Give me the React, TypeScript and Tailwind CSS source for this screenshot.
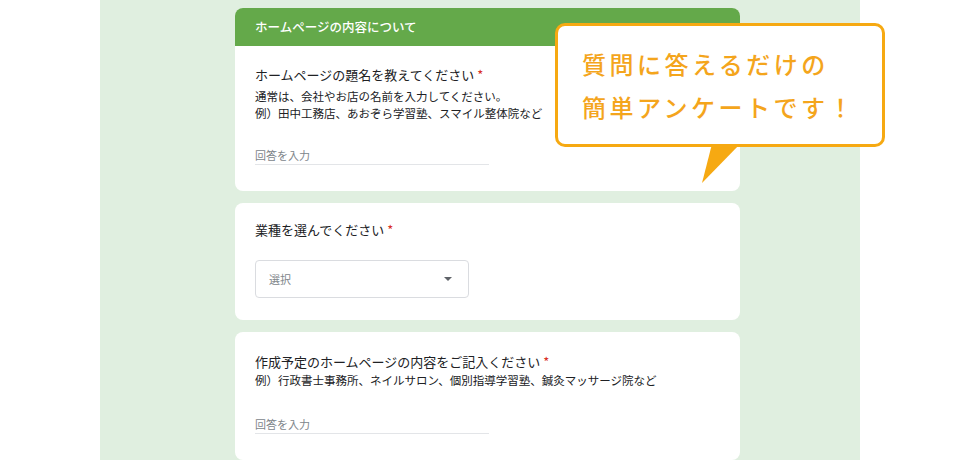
const jp = { fontFamily: '"Noto Sans CJK JP", "Noto Sans", sans-serif' };

function Required() {
  return <span className="ml-[3px] text-[#d93025]">*</span>;
}

function AnswerLine() {
  return (
    <div className="w-[234px] border-b border-[#e3e5e8] pb-[1px] text-[11px] leading-[16px] text-[#80868b]">
      回答を入力
    </div>
  );
}

export default function App() {
  return (
    <div className="relative h-[460px] w-[960px] overflow-hidden bg-white text-[#202124]" style={jp}>
      <div className="ml-[100px] h-full w-[760px] bg-[#e0efe0] pt-2">
        <div className="ml-[135px] flex w-[505px] flex-col gap-3">
          {/* section card */}
          <div className="rounded-lg bg-white">
            <div className="flex h-[38px] items-center rounded-t-lg bg-[#64a94a] px-5 text-[12.5px] font-medium text-white">
              ホームページの内容について
            </div>
            <div className="px-5 pb-[26px] pt-5">
              <div className="text-[13px] leading-[18px]">
                ホームページの題名を教えてください
                <Required />
              </div>
              <div className="mt-[4px] text-[11.5px] leading-[16.5px]">
                <div>通常は、会社やお店の名前を入力してください。</div>
                <div>例）田中工務店、あおぞら学習塾、スマイル整体院など</div>
              </div>
              <div className="mt-[26px]">
                <AnswerLine />
              </div>
            </div>
          </div>

          <div className="rounded-lg bg-white px-5 pb-[22px] pt-[18px]">
            <div className="text-[13px] leading-[18px]">
              業種を選んでください
              <Required />
            </div>
            <div className="mt-[21px] flex h-[38px] w-[214px] items-center justify-between rounded border border-[#dadce0] pl-[13px] pr-[16px]">
              <span className="text-[11px] text-[#80868b]">選択</span>
              <svg width="8" height="4" viewBox="0 0 8 4">
                <path d="M0 0h8L4 4z" fill="#5f6368" />
              </svg>
            </div>
          </div>

          <div className="rounded-lg bg-white px-5 pb-[26px] pt-[21px]">
            <div className="text-[13px] leading-[18px]">
              作成予定のホームページの内容をご記入ください
              <Required />
            </div>
            <div className="mt-[1px] text-[11.5px] leading-[16.5px]">
              例）行政書士事務所、ネイルサロン、個別指導学習塾、鍼灸マッサージ院など
            </div>
            <div className="mt-[27px]">
              <AnswerLine />
            </div>
          </div>
        </div>
      </div>

      {/* callout bubble */}
      <div className="absolute left-[555px] top-[23px] h-[124px] w-[330px] rounded-[10px] border-[3px] border-[#f6a912] bg-white pl-6 pt-[16px] text-[24px] font-medium leading-[43px] tracking-[3.5px] text-[#f4a51c]">
        <div>質問に答えるだけの</div>
        <div>簡単アンケートです！</div>
      </div>
      <svg className="absolute left-[700px] top-[143px]" width="42" height="42" viewBox="0 0 42 42">
        <path d="M12 1H40L2 40z" fill="#f6a912" />
      </svg>
    </div>
  );
}
